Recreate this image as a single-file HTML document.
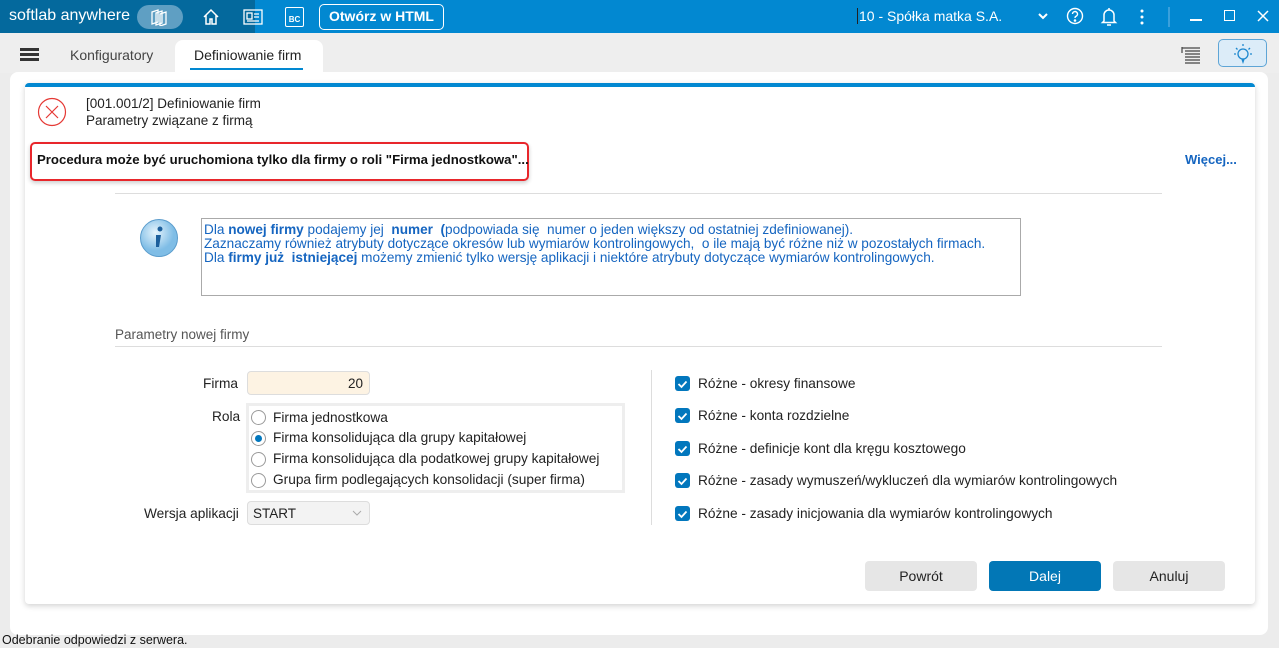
<!DOCTYPE html>
<html><head><meta charset="utf-8"><style>
*{box-sizing:border-box;margin:0;padding:0}
body{width:1279px;height:648px;overflow:hidden;background:#ececec;font-family:"Liberation Sans",sans-serif;font-size:13px;color:#222;position:relative}
.abs{position:absolute}
.top{left:0;top:0;width:1279px;height:33px;background:#0288d1}
.topl{left:0;top:0;width:255px;height:33px;background:#04699d}
.tabbar{left:0;top:33px;width:1279px;height:40px;background:#eeeeee}
.panel{left:10px;top:72px;width:1258px;height:563px;background:#fff;border-radius:8px}
.dlg{left:25px;top:83px;width:1230px;height:521px;background:#fff;border-top:4px solid #0288d1;border-radius:4px;box-shadow:0 2px 6px rgba(0,0,0,.18)}
.btn{height:30px;border-radius:4px;text-align:center;line-height:30px;font-size:14px}
.cb{width:15px;height:15px;background:#0277bd;border-radius:3px}
.rad{width:15px;height:15px;border:1px solid #999;border-radius:50%;background:#fff}
.lbl{font-size:13.7px}
</style></head><body>
<div class="abs top"></div><div class="abs topl"></div>
<div class="abs" style="left:9px;top:7px;color:#fff;font-size:16px">softlab anywhere</div>
<div class="abs" style="left:137px;top:5px;width:46px;height:24px;border-radius:12px;background:#5f9fc3"></div>
<svg class="abs" style="left:150px;top:8px" width="20" height="18" fill="none" stroke="#fff" stroke-width="1.3"><path d="M2 4l6-2v12l-6 2z M6 5l6-2v12l-6 2z M10 6l6-2v12l-6 2z"/></svg>
<svg class="abs" style="left:202px;top:8px" width="18" height="18" fill="none" stroke="#fff" stroke-width="1.5"><path d="M2 9l7-7 7 7M4 7v9h4v-5h2v5h4V7"/></svg>
<svg class="abs" style="left:243px;top:9px" width="20" height="16" fill="none" stroke="#fff" stroke-width="1.3"><rect x="1" y="1" width="18" height="14"/><rect x="4" y="4" width="5" height="6"/><path d="M11 5h5M11 8h5M4 12h12"/></svg>
<div class="abs" style="left:285px;top:7px;width:19px;height:20px;border:1.3px solid #fff;border-radius:2px;color:#fff;font-size:8px;text-align:center;padding-top:7px;font-weight:bold">BC</div>
<div class="abs" style="left:319px;top:4px;width:125px;height:26px;border:1.5px solid #fff;border-radius:5px;color:#fff;font-size:14px;font-weight:bold;text-align:center;line-height:23px">Otwórz w HTML</div>
<div class="abs" style="left:857px;top:8px;color:#fff;font-size:14px;border-left:1px solid #222;padding-left:1px">10 - Spółka matka S.A.</div>
<svg class="abs" style="left:1037px;top:12px" width="12" height="8" fill="none" stroke="#fff" stroke-width="2"><path d="M2 2l4 4 4-4"/></svg>
<svg class="abs" style="left:1066px;top:7px" width="18" height="18" fill="none" stroke="#fff" stroke-width="1.4"><circle cx="9" cy="9" r="7.5"/><path d="M6.5 7a2.5 2.5 0 1 1 3.5 2.3c-.8.4-1 .9-1 1.7"/><circle cx="9" cy="13.5" r=".6" fill="#fff"/></svg>
<svg class="abs" style="left:1100px;top:6px" width="18" height="21" fill="none" stroke="#fff" stroke-width="1.5"><path d="M9 2v1.5M4 15V9a5 5 0 0 1 10 0v6l1.5 1.5h-13zM7 19h4"/></svg>
<svg class="abs" style="left:1140px;top:9px" width="4" height="16" fill="#fff"><circle cx="2" cy="2" r="1.5"/><circle cx="2" cy="8" r="1.5"/><circle cx="2" cy="14" r="1.5"/></svg>
<div class="abs" style="left:1168px;top:7px;width:2px;height:20px;background:#3aa0dc"></div>
<div class="abs" style="left:1190px;top:19px;width:12px;height:1.5px;background:#fff"></div>
<div class="abs" style="left:1224px;top:10px;width:11px;height:11px;border:1.5px solid #fff"></div>
<svg class="abs" style="left:1257px;top:10px" width="12" height="12" stroke="#fff" stroke-width="1.5"><path d="M1 1l10 10M11 1L1 11"/></svg>

<div class="abs tabbar"></div>
<div class="abs" style="left:20px;top:48px;width:19px;height:3px;background:#333;box-shadow:0 5px 0 #333,0 10px 0 #333"></div>
<div class="abs" style="left:70px;top:47px;font-size:14px;color:#444">Konfiguratory</div>
<div class="abs" style="left:175px;top:40px;width:148px;height:36px;background:#fff;border-radius:8px 8px 0 0"></div>
<div class="abs" style="left:194px;top:47px;font-size:14px;color:#222">Definiowanie firm</div>
<div class="abs" style="left:190px;top:68px;width:113px;height:2px;background:#0288d1"></div>
<svg class="abs" style="left:1181px;top:46px" width="20" height="18" fill="none" stroke="#444" stroke-width="1.2"><path d="M1 1v6M1 2h18M4 5h15M4 8h15M4 11h15M4 14h15M4 17h15"/></svg>
<div class="abs" style="left:1218px;top:39px;width:49px;height:28px;border:1px solid #5ea5d6;border-radius:5px;background:#dcecf8"></div>
<svg class="abs" style="left:1232px;top:42px" width="22" height="22" fill="none" stroke="#1e88cf" stroke-width="1.3"><circle cx="11" cy="12" r="5"/><path d="M11 2v2M4 6l1.5 1.5M18 6l-1.5 1.5M2 12h2M18 12h2M10 17l1 3 1-3"/></svg>

<div class="abs panel"></div>
<div class="abs dlg"></div>
<svg class="abs" style="left:37px;top:97px" width="30" height="30" fill="none" stroke="#e53935" stroke-width="1.2"><circle cx="15" cy="15" r="13.5"/><path d="M9 9l12 12M21 9L9 21"/></svg>
<div class="abs" style="left:86px;top:95px;font-size:13.5px;line-height:17px">[001.001/2] Definiowanie firm<br>Parametry związane z firmą</div>
<div class="abs" style="left:30px;top:142px;width:499px;height:39px;border:2px solid #e8262b;border-radius:5px;box-shadow:0 2px 4px rgba(0,0,0,.2)"></div>
<div class="abs" style="left:37px;top:152px;font-size:13.2px;font-weight:bold;color:#111">Procedura może być uruchomiona tylko dla firmy o roli "Firma jednostkowa"...</div>
<div class="abs" style="left:1185px;top:152px;font-size:13px;font-weight:bold;color:#1565c0">Więcej...</div>
<div class="abs" style="left:115px;top:193px;width:1047px;height:1px;background:#ddd"></div>
<svg class="abs" style="left:139px;top:218px" width="40" height="40"><defs><radialGradient id="g" cx="40%" cy="35%"><stop offset="0" stop-color="#e6f4fc"/><stop offset="1" stop-color="#7fbde6"/></radialGradient></defs><circle cx="20" cy="20" r="18.5" fill="url(#g)" stroke="#5a9ccc"/><circle cx="21" cy="11" r="2.5" fill="#1c5f9c"/><path d="M17 17h5l-2 12h-3z" fill="#1c5f9c"/></svg>
<div class="abs" style="left:201px;top:218px;width:820px;height:78px;border:1px solid #aaa;padding:4px 2px;font-size:13.6px;line-height:14px;color:#1565c0;white-space:nowrap;overflow:hidden">Dla <b>nowej firmy</b> podajemy jej &nbsp;<b>numer</b> &nbsp;<b>(</b>podpowiada się &nbsp;numer o jeden większy od ostatniej zdefiniowanej).<br>Zaznaczamy również atrybuty dotyczące okresów lub wymiarów kontrolingowych, &nbsp;o ile mają być różne niż w pozostałych firmach.<br>Dla <b>firmy już &nbsp;istniejącej</b> możemy zmienić tylko wersję aplikacji i niektóre atrybuty dotyczące wymiarów kontrolingowych.</div>
<div class="abs" style="left:115px;top:327px;font-size:13.5px;color:#555">Parametry nowej firmy</div>
<div class="abs" style="left:115px;top:346px;width:1047px;height:1px;background:#ddd"></div>

<div class="abs lbl" style="left:203px;top:376px">Firma</div>
<div class="abs" style="left:247px;top:371px;width:123px;height:24px;background:#fdf3e3;border:1px solid #ddd;border-radius:4px;text-align:right;padding:4px 6px;font-size:13.5px">20</div>
<div class="abs lbl" style="left:212px;top:409px">Rola</div>
<div class="abs" style="left:246px;top:403px;width:379px;height:90px;border:3px solid #eee"></div>
<div class="abs rad" style="left:251px;top:410px"></div><div class="abs lbl" style="left:273px;top:410px">Firma jednostkowa</div>
<div class="abs rad" style="left:251px;top:431px"></div><div class="abs" style="left:255px;top:435px;width:7px;height:7px;border-radius:50%;background:#0277bd"></div><div class="abs lbl" style="left:273px;top:430px">Firma konsolidująca dla grupy kapitałowej</div>
<div class="abs rad" style="left:251px;top:452px"></div><div class="abs lbl" style="left:273px;top:451px">Firma konsolidująca dla podatkowej grupy kapitałowej</div>
<div class="abs rad" style="left:251px;top:473px"></div><div class="abs lbl" style="left:273px;top:472px">Grupa firm podlegających konsolidacji (super firma)</div>
<div class="abs lbl" style="left:144px;top:506px">Wersja aplikacji</div>
<div class="abs" style="left:247px;top:501px;width:123px;height:24px;background:#f3f3f3;border:1px solid #ddd;border-radius:4px;padding:4px 5px;font-size:13.5px">START</div>
<svg class="abs" style="left:352px;top:510px" width="10" height="6" fill="none" stroke="#aaa"><path d="M1 1l4 4 4-4"/></svg>

<div class="abs" style="left:651px;top:370px;width:1px;height:155px;background:#ddd"></div>
<div class="abs cb" style="left:675px;top:376px"></div><div class="abs lbl" style="left:698px;top:376px">Różne - okresy finansowe</div>
<div class="abs cb" style="left:675px;top:408px"></div><div class="abs lbl" style="left:698px;top:408px">Różne - konta rozdzielne</div>
<div class="abs cb" style="left:675px;top:441px"></div><div class="abs lbl" style="left:698px;top:441px">Różne - definicje kont dla kręgu kosztowego</div>
<div class="abs cb" style="left:675px;top:473px"></div><div class="abs lbl" style="left:698px;top:473px">Różne - zasady wymuszeń/wykluczeń dla wymiarów kontrolingowych</div>
<div class="abs cb" style="left:675px;top:506px"></div><div class="abs lbl" style="left:698px;top:506px">Różne - zasady inicjowania dla wymiarów kontrolingowych</div>
<svg class="abs" style="left:675px;top:376px" width="15" height="150" fill="none" stroke="#fff" stroke-width="1.8"><path d="M3.5 8l3 3 5-5.5M3.5 40l3 3 5-5.5M3.5 73l3 3 5-5.5M3.5 105l3 3 5-5.5M3.5 138l3 3 5-5.5"/></svg>

<div class="abs btn" style="left:865px;top:561px;width:112px;background:#e6e6e6">Powrót</div>
<div class="abs btn" style="left:989px;top:561px;width:112px;background:#0277b6;color:#fff">Dalej</div>
<div class="abs btn" style="left:1113px;top:561px;width:112px;background:#e6e6e6">Anuluj</div>
<div class="abs" style="left:2px;top:633px;font-size:12.5px;color:#111">Odebranie odpowiedzi z serwera.</div>
</body></html>
